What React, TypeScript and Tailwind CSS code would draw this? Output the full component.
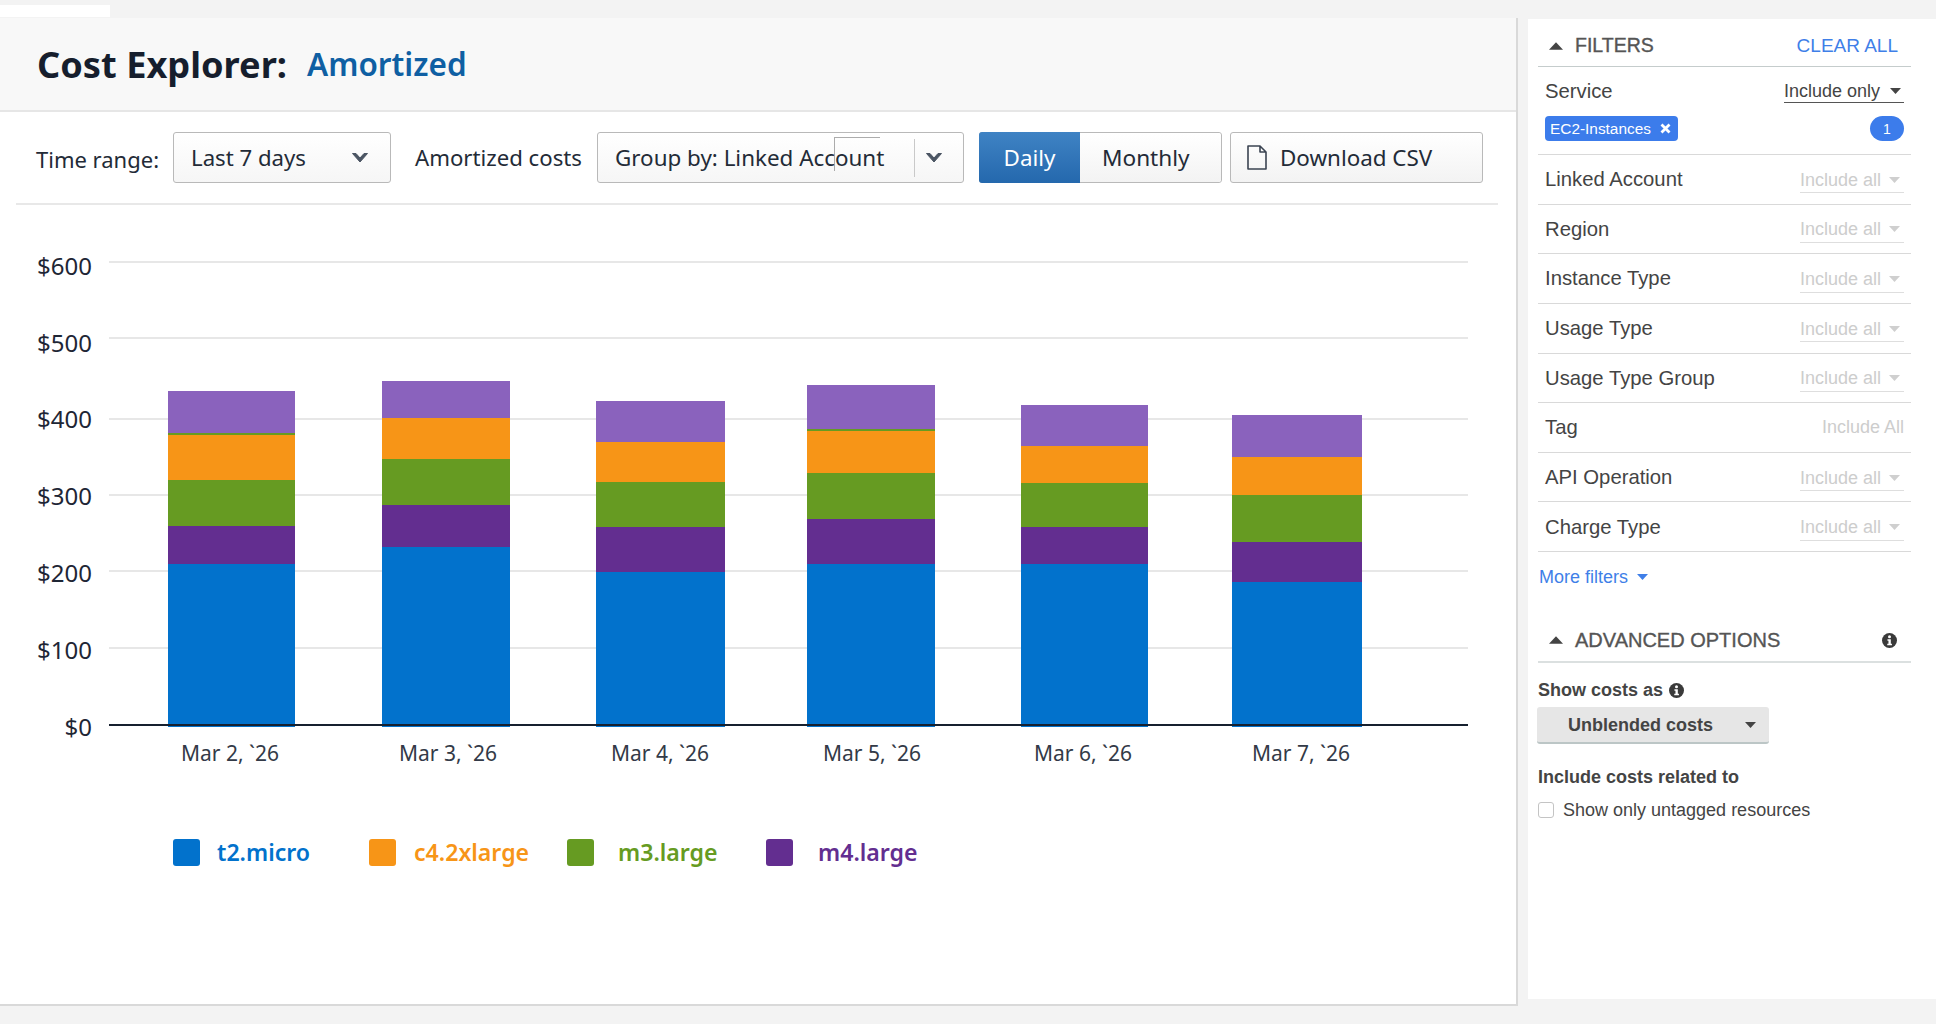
import React from "react";

const BLUE = "#0272cc";
const PURPLE = "#632e90";
const GREEN = "#669b22";
const ORANGE = "#f79517";
const LILAC = "#8a62bd";

const bars = [
  { x: 168, w: 127, y: [391, 433, 435, 480, 526, 564], label: "Mar 2, `26", cx: 230 },
  { x: 382, w: 128, y: [381, 418, 418, 459, 505, 547], label: "Mar 3, `26", cx: 448 },
  { x: 596, w: 129, y: [401, 442, 442, 482, 527, 572], label: "Mar 4, `26", cx: 660 },
  { x: 807, w: 128, y: [385, 429, 431, 473, 519, 564], label: "Mar 5, `26", cx: 872 },
  { x: 1021, w: 127, y: [405, 446, 446, 483, 527, 564], label: "Mar 6, `26", cx: 1083 },
  { x: 1232, w: 130, y: [415, 457, 457, 495, 542, 582], label: "Mar 7, `26", cx: 1301 },
];

const grid = [
  { v: "$600", y: 262, t: 275 },
  { v: "$500", y: 338, t: 352 },
  { v: "$400", y: 419, t: 428 },
  { v: "$300", y: 495, t: 505 },
  { v: "$200", y: 571, t: 582 },
  { v: "$100", y: 648, t: 659 },
];

function Chevron({ className = "" }: { className?: string }) {
  return (
    <svg width="18" height="12" viewBox="0 0 18 12" className={className}>
      <path d="M1.5 1.5 L9 10 L16.5 1.5 L13 1.5 L9 6 L5 1.5 Z" fill="#4b5563" stroke="#4b5563" strokeWidth="1" strokeLinejoin="round" />
    </svg>
  );
}

function Caret({ color = "#444", up = false, w = 11 }: { color?: string; up?: boolean; w?: number }) {
  return (
    <svg width={w} height={Math.round(w * 0.55)} viewBox="0 0 11 6" className="block shrink-0">
      <path d={up ? "M5.5 0 L11 6 L0 6 Z" : "M0 0 L11 0 L5.5 6 Z"} fill={color} />
    </svg>
  );
}

function Info({ size = 15 }: { size?: number }) {
  return (
    <svg width={size} height={size} viewBox="0 0 16 16" className="block shrink-0">
      <circle cx="8" cy="8" r="8" fill="#3a3a3a" />
      <circle cx="8" cy="4" r="1.6" fill="#fff" />
      <path d="M5.8 6.6 H9.4 V11.4 H10.6 V13 H5.6 V11.4 H6.9 V8.2 H5.8 Z" fill="#fff" />
    </svg>
  );
}

function FilterRow({ name, value = "Include all" }: { name: string; value?: string }) {
  const tag = value === "Include All";
  return (
    <div className="h-[49.625px] border-b border-[#d9d9d9] pl-[7px] pr-[7px] flex items-center justify-between">
      <span className="text-[20.3px] text-[#444] leading-none">{name}</span>
      {tag ? (
        <span className="text-[18px] text-[#cdcdcd] leading-none">{value}</span>
      ) : (
        <span className="w-[104px] h-[26px] mt-[2px] border-b border-[#dedede] flex items-center justify-between pr-[4px]">
          <span className="text-[18px] text-[#cdcdcd] leading-none">{value}</span>
          <Caret color="#cfcfcf" />
        </span>
      )}
    </div>
  );
}

function Legend({ color, label, w, gap }: { color: string; label: string; w: string; gap: string }) {
  return (
    <div className={`flex items-center ${w}`}>
      <span className="w-[27px] h-[27px] rounded-[3px] shrink-0" style={{ backgroundColor: color }} />
      <span className={`${gap} text-[23.1px] font-semibold leading-none`} style={{ color }}>
        {label}
      </span>
    </div>
  );
}

export default function App() {
  return (
    <div className="w-[1936px] h-[1024px] overflow-hidden bg-[#f3f3f3] font-['Noto_Sans',sans-serif]">
      <div className="h-[18px] pt-[5px]">
        <div className="w-[110px] h-[12px] bg-white" />
      </div>
      <div className="flex items-start gap-[10px]">
        {/* Main card */}
        <div className="w-[1518px] h-[988px] bg-white border-r-2 border-b-2 border-[#d9d9d9] flex flex-col">
          <div className="h-[94px] bg-[#f8f8f8] border-b-2 border-[#e6e6e6] pl-[37px] flex items-center shrink-0">
            <span className="text-[36.2px] font-bold text-[#161e2d] leading-none">Cost Explorer:</span>
            <span className="ml-[20px] text-[31.5px] font-semibold text-[#0f5fa3] leading-none">Amortized</span>
          </div>

          <div className="ml-[16px] w-[1482px] h-[93px] border-b-2 border-[#e8e8e8] pl-[20px] pt-[20px] shrink-0">
            <div className="flex items-center h-[51px] relative">
              <span className="pt-[2px] text-[22px] text-[#232b37] w-[137px] leading-none">Time range:</span>
              <div className="w-[218px] h-[51px] border border-[#b9b9b9] rounded-[3px] bg-gradient-to-b from-white to-[#f6f6f6] flex items-center pl-[17px] pr-[21px] justify-between">
                <span className="pt-[2px] text-[22.2px] text-[#232b37] leading-none">Last 7 days</span>
                <Chevron />
              </div>
              <span className="pt-[2px] ml-[24px] w-[182px] text-[22.2px] text-[#232b37] leading-none whitespace-nowrap">Amortized costs</span>
              <div className="w-[367px] h-[51px] border border-[#b9b9b9] rounded-[3px] bg-gradient-to-b from-white to-[#f6f6f6] flex items-center pl-[17px] relative">
                <span className="pt-[2px] text-[22.4px] text-[#232b37] leading-none whitespace-nowrap">Group by: Linked Account</span>
                <span className="absolute left-[316px] top-[6px] h-[38px] border-l border-[#c9c9c9]" />
                <Chevron className="absolute left-[327px] top-[19px]" />
                <span className="absolute left-[236px] top-[4px] w-[46px] h-[34px] border-l border-t border-[#8a8a8a] opacity-70" />
              </div>
              <div className="ml-[15px] w-[243px] h-[51px] flex rounded-[3px] border border-[#b9b9b9]">
                <div className="pt-[2px] w-[101px] -my-px -ml-px rounded-l-[3px] bg-gradient-to-b from-[#3f83c4] to-[#2468ad] flex items-center justify-center text-[22.4px] text-white leading-none">Daily</div>
                <div className="pt-[2px] flex-1 bg-gradient-to-b from-white to-[#f3f3f3] rounded-r-[3px] flex items-center pl-[22px] text-[22.6px] text-[#232b37] leading-none">Monthly</div>
              </div>
              <div className="ml-[8px] w-[253px] h-[51px] border border-[#b9b9b9] rounded-[3px] bg-gradient-to-b from-white to-[#f3f3f3] flex items-center pl-[16px]">
                <svg width="20" height="25" viewBox="0 0 20 25" className="block shrink-0">
                  <path d="M1 1 H13 L19 7 V24 H1 Z M13 1 V7 H19" fill="none" stroke="#3b4452" strokeWidth="1.6" strokeLinejoin="round" />
                </svg>
                <span className="pt-[2px] ml-[13px] text-[22.4px] text-[#232b37] leading-none">Download CSV</span>
              </div>
            </div>
          </div>

          <svg width="1516" height="580" viewBox="0 205 1516 580" className="block shrink-0">
            {grid.map((g) => (
              <g key={g.v}>
                <line x1="109" x2="1468" y1={g.y} y2={g.y} stroke="#e7e7e7" strokeWidth="2" />
                <text x="92" y={g.t} textAnchor="end" fontSize="24" fill="#1e2635">
                  {g.v}
                </text>
              </g>
            ))}
            {bars.map((b) => (
              <g key={b.label}>
                <rect x={b.x} y={b.y[0]} width={b.w} height={b.y[1] - b.y[0]} fill={LILAC} />
                <rect x={b.x} y={b.y[1]} width={b.w} height={b.y[2] - b.y[1]} fill={GREEN} />
                <rect x={b.x} y={b.y[2]} width={b.w} height={b.y[3] - b.y[2]} fill={ORANGE} />
                <rect x={b.x} y={b.y[3]} width={b.w} height={b.y[4] - b.y[3]} fill={GREEN} />
                <rect x={b.x} y={b.y[4]} width={b.w} height={b.y[5] - b.y[4]} fill={PURPLE} />
                <rect x={b.x} y={b.y[5]} width={b.w} height={727 - b.y[5]} fill={BLUE} />
                <text x={b.cx} y="761" textAnchor="middle" fontSize="21" fill="#333a47">
                  {b.label}
                </text>
              </g>
            ))}
            <line x1="109" x2="1468" y1="725" y2="725" stroke="#16202f" strokeWidth="2" />
            <text x="92" y="736" textAnchor="end" fontSize="24" fill="#1e2635">
              $0
            </text>
          </svg>

          <div className="flex items-center pl-[173px] mt-[54px]">
            <Legend color={BLUE} label="t2.micro" w="w-[196px]" gap="ml-[17px]" />
            <Legend color={ORANGE} label="c4.2xlarge" w="w-[198px]" gap="ml-[18px]" />
            <Legend color={GREEN} label="m3.large" w="w-[199px]" gap="ml-[24px]" />
            <Legend color={PURPLE} label="m4.large" w="w-[180px]" gap="ml-[25px]" />
          </div>
        </div>

        {/* Filters */}
        <div className="w-[408px] h-[980px] mt-px bg-white pl-[10px] pr-[25px] font-['Liberation_Sans',sans-serif]">
          <div className="h-[48px] pt-[6px] border-b border-[#c5cccc] flex items-center justify-between pl-[11px] pr-[13px]">
            <div className="flex items-center">
              <Caret color="#444" up w={14} />
              <span className="ml-[12px] text-[19.5px] text-[#555] leading-none [-webkit-text-stroke:0.35px_#555]">FILTERS</span>
            </div>
            <span className="text-[19px] text-[#3f7fe8] leading-none">CLEAR ALL</span>
          </div>

          <div className="h-[88px] border-b border-[#d9d9d9] pl-[7px] pr-[7px] pt-[10px]">
            <div className="flex items-center justify-between h-[28px]">
              <span className="text-[20.3px] text-[#444] leading-none">Service</span>
              <span className="w-[120px] h-[24px] border-b border-[#555] flex items-center justify-between pr-[3px]">
                <span className="text-[18px] text-[#444] leading-none">Include only</span>
                <Caret color="#444" />
              </span>
            </div>
            <div className="flex items-center justify-between mt-[11px]">
              <span className="w-[133px] h-[25px] rounded-[4px] bg-[#3c7ceb] flex items-center pl-[5px] text-white">
                <span className="text-[15.4px] leading-none">EC2-Instances</span>
                <svg width="11" height="11" viewBox="0 0 11 11" className="ml-[9px] block">
                  <path d="M1.5 1.5 L9.5 9.5 M9.5 1.5 L1.5 9.5" stroke="#fff" strokeWidth="2.8" />
                </svg>
              </span>
              <span className="w-[34px] h-[25px] rounded-full bg-[#3c7ceb] flex items-center justify-center text-white text-[14px] leading-none">1</span>
            </div>
          </div>

          <FilterRow name="Linked Account" />
          <FilterRow name="Region" />
          <FilterRow name="Instance Type" />
          <FilterRow name="Usage Type" />
          <FilterRow name="Usage Type Group" />
          <FilterRow name="Tag" value="Include All" />
          <FilterRow name="API Operation" />
          <FilterRow name="Charge Type" />

          <div className="flex items-center h-[49px] pl-[1px]">
            <span className="text-[18px] text-[#3f7fe8] leading-none">More filters</span>
            <span className="ml-[9px]">
              <Caret color="#3f7fe8" />
            </span>
          </div>

          <div className="mt-[22px] h-[34px] border-b-2 border-[#dbe0e0] flex items-center justify-between pl-[11px] pr-[14px] pb-[4px] box-content">
            <div className="flex items-center">
              <Caret color="#444" up w={14} />
              <span className="ml-[12px] text-[20px] text-[#555] leading-none [-webkit-text-stroke:0.35px_#555]">ADVANCED OPTIONS</span>
            </div>
            <Info />
          </div>

          <div className="flex items-center mt-[17px] h-[20px]">
            <span className="text-[18px] font-bold text-[#444] leading-none">Show costs as</span>
            <span className="ml-[6px]">
              <Info />
            </span>
          </div>
          <div className="mt-[7px] -ml-px w-[232px] h-[37px] rounded-[3px] bg-[#e6e6e6] border-b-2 border-[#bcc6c6] flex items-center pl-[31px]">
            <span className="text-[18px] font-bold text-[#444] leading-none">Unblended costs</span>
            <span className="ml-[32px]">
              <Caret color="#444" />
            </span>
          </div>
          <div className="mt-[24px] text-[18px] font-bold text-[#444] leading-none">Include costs related to</div>
          <div className="flex items-center mt-[15px]">
            <span className="w-[16px] h-[16px] rounded-[3px] border border-[#c4c4c4] bg-white" />
            <span className="ml-[9px] text-[18px] text-[#444] leading-none">Show only untagged resources</span>
          </div>
        </div>
      </div>
    </div>
  );
}
